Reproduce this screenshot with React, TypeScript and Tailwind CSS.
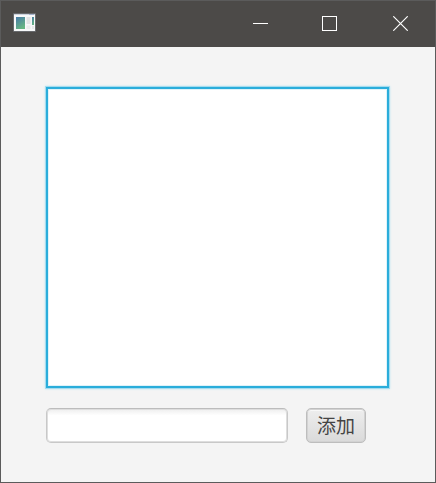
import { useState } from "react";

function AppIcon() {
  return (
    <svg width="23" height="19" viewBox="0 0 23 19" aria-hidden="true">
      <defs>
        <linearGradient id="preview" x1="0" y1="0" x2="0.5" y2="1">
          <stop offset="0" stopColor="#4679a8" />
          <stop offset="1" stopColor="#66b583" />
        </linearGradient>
      </defs>
      <rect width="23" height="19" rx="1" fill="#686a6d" />
      <rect x="1" y="1" width="21" height="17" fill="#f7f8f9" />
      <rect x="1" y="1" width="21" height="1" fill="#cdd3de" />
      <rect x="16" y="1" width="5" height="1" fill="#a4b1cb" />
      <rect x="3" y="4" width="9" height="12" fill="url(#preview)" />
      <rect x="13.5" y="4" width="4" height="7" fill="#e2e3e5" />
      <rect x="13.5" y="12.5" width="4" height="3.5" fill="#ebeced" />
      <rect x="19" y="4" width="2" height="8" fill="url(#preview)" />
      <rect x="19" y="13" width="2" height="3" fill="#e8e9ea" />
    </svg>
  );
}

function TitleBar() {
  return (
    <header className="flex h-[46px] shrink-0 justify-between bg-[#4c4a48] pr-[27px] pl-3">
      <div className="pt-3">
        <AppIcon />
      </div>
      <div className="flex h-full pt-[15px] text-white">
        <button aria-label="最小化" className="h-[15px] w-[15px]">
          <svg width="15" height="15" className="block" shapeRendering="crispEdges">
            <rect y="7" width="15" height="1" fill="currentColor" />
          </svg>
        </button>
        <button aria-label="最大化" className="ml-[54px] h-[15px] w-[15px] border border-white" />
        <button aria-label="关闭" className="ml-14 h-[15px] w-[15px]">
          <svg width="15" height="15" className="block" stroke="currentColor" strokeWidth="1.15">
            <path d="M0.3 0.3 14.7 14.7M14.7 0.3 0.3 14.7" />
          </svg>
        </button>
      </div>
    </header>
  );
}

export default function App() {
  const [text, setText] = useState("");
  const [items, setItems] = useState<string[]>([]);
  const add = () => {
    if (text) {
      setItems([...items, text]);
      setText("");
    }
  };
  return (
    <div className="flex h-[483px] w-[436px] flex-col overflow-hidden border border-[#5b5b5b] bg-[#f4f4f4] font-['Noto_Sans_CJK_SC',sans-serif]">
      <TitleBar />
      <main className="flex flex-col pt-10 pl-[45px]">
        <ul className="h-[301px] w-[343px] overflow-auto border-2 border-[#2aaddb] bg-white text-lg shadow-[0_0_0_1px_#a5dcef,0_0_2px_1px_#bfe6f3,inset_0_0_0_1px_#def3fa]">
          {items.map((item, i) => (
            <li key={i} className="px-2">{item}</li>
          ))}
        </ul>
        <div className="mt-5 flex gap-[18px]">
          <input
            value={text}
            onChange={(e) => setText(e.target.value)}
            className="h-[35px] w-[242px] rounded-[5px] border border-[#c8c8c8] border-t-[#bcbcbc] bg-white bg-linear-to-b from-[#eeeeee] to-white to-20% px-2 text-lg shadow-[inset_0_0_0_1px_#dedede] outline-none"
          />
          <button
            onClick={add}
            className="flex h-[35px] w-[60px] items-center justify-center rounded-[5px] border border-[#bdbdbd] bg-linear-to-b from-[#eeeeee] to-[#dadada] pb-0.5 text-[19px] leading-none text-[#444444] shadow-[inset_0_0_0_1px_#d2d2d2,inset_0_2px_0_#f8f8f8]"
          >
            添加
          </button>
        </div>
      </main>
    </div>
  );
}
